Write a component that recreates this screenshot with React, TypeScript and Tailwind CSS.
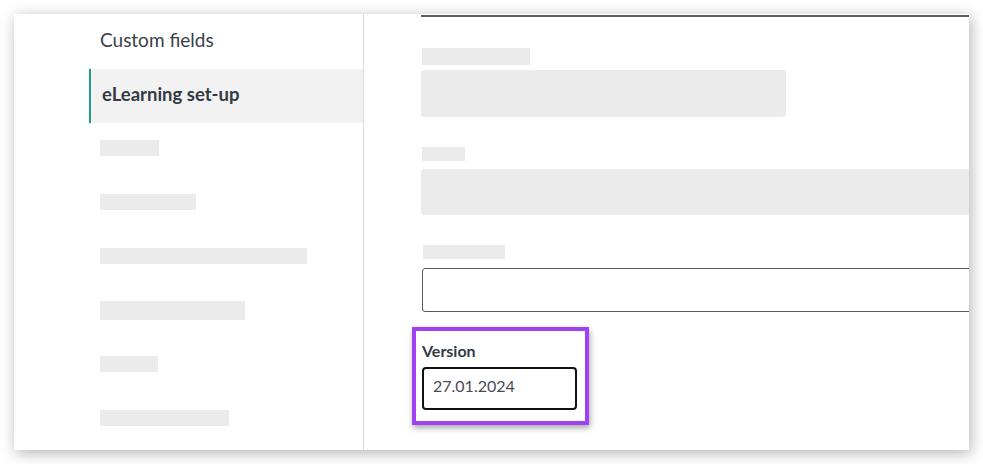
import React from "react";

const navSkeletons = [
  { w: "w-[59px]", h: "h-[16px]" },
  { w: "w-[96px]", h: "h-[16px]" },
  { w: "w-[207px]", h: "h-[16px]" },
  { w: "w-[145px]", h: "h-[19px]" },
  { w: "w-[58px]", h: "h-[16px]" },
  { w: "w-[129px]", h: "h-[16px]" },
];

function Sidebar() {
  return (
    <aside className="w-[350px] shrink-0 border-r border-[#dadada] pt-px pl-[75px]">
      <div className="flex h-[54px] items-center pb-[4px] pl-[11px] text-[19px] text-[#3a404c]">
        Custom fields
      </div>
      <div className="flex h-[54px] items-center border-l-2 border-[#1f9e8b] bg-[#f2f2f2] pb-[2px] pl-[11px] text-[18.5px] font-bold text-[#333a45]">
        eLearning set-up
      </div>
      {navSkeletons.map((s, i) => (
        <div key={i} className="flex h-[54px] items-center pb-[4px] pl-[11px]">
          <div className={`${s.w} ${s.h} bg-[#ebebeb]`} />
        </div>
      ))}
    </aside>
  );
}

function VersionField() {
  return (
    <div className="relative mt-[29px] w-[155px]">
      {/* highlight frame around the field */}
      <div className="pointer-events-none absolute -top-[14px] -bottom-[15px] -left-[10px] -right-[12px] border-4 border-[#a13ff2] shadow-[1px_3px_6px_rgba(0,0,0,0.35)]" />
      <label className="mb-[6px] block text-[16px] leading-[20px] font-bold text-[#333a45]">
        Version
      </label>
      <div className="flex h-[43px] items-center rounded-[4px] border-2 border-[#111111] pb-[5px] pl-[9px] text-[16px] text-[#464b55]">
        27.01.2024
      </div>
    </div>
  );
}

function Content() {
  return (
    <main className="min-w-0 flex-1 overflow-hidden pl-[57px]">
      <div className="mt-px h-[2px] w-[600px] bg-[#5e5e5e]" />

      <div className="mt-[31px] ml-px h-[17px] w-[108px] bg-[#ebebeb]" />
      <div className="mt-[5px] h-[47px] w-[365px] rounded-[3px] bg-[#ebebeb]" />

      <div className="mt-[30px] ml-px h-[14px] w-[43px] bg-[#ebebeb]" />
      <div className="mt-[8px] h-[46px] w-[600px] rounded-[3px] bg-[#ebebeb]" />

      <div className="mt-[30px] ml-[2px] h-[14px] w-[82px] bg-[#ebebeb]" />
      <div className="mt-[9px] ml-px h-[44px] w-[600px] rounded-[3px] border-[1.5px] border-[#5a5a5a]" />

      <div className="ml-px">
        <VersionField />
      </div>
    </main>
  );
}

export default function App() {
  return (
    <div
      className="h-[464px] w-[983px] overflow-hidden bg-white p-[14px]"
      style={{ fontFamily: "Lato, 'Noto Sans', sans-serif" }}
    >
      <div className="flex h-[436px] w-[955px] overflow-hidden bg-white shadow-[2px_3px_14px_rgba(0,0,0,0.3)]">
        <Sidebar />
        <Content />
      </div>
    </div>
  );
}
